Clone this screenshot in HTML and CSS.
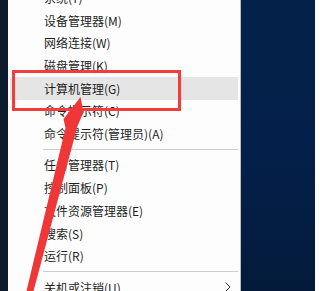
FILE: index.html
```html
<!DOCTYPE html>
<html lang="zh-CN">
<head>
<meta charset="utf-8">
<title>Win+X 菜单</title>
<link rel="stylesheet" href="styles.css">
</head>
<body>
<div class="screen">
  <div class="strip"></div>
  <div class="menu">
    <ul class="items">
      <li class="item">系统(Y)</li>
      <li class="item">设备管理器(M)</li>
      <li class="item">网络连接(W)</li>
      <li class="item">磁盘管理(K)</li>
      <li class="item hover">计算机管理(G)</li>
      <li class="item">命令提示符(C)</li>
      <li class="item">命令提示符(管理员)(A)</li>
      <li class="sep"></li>
      <li class="item">任务管理器(T)</li>
      <li class="item">控制面板(P)</li>
      <li class="item">文件资源管理器(E)</li>
      <li class="item">搜索(S)</li>
      <li class="item">运行(R)</li>
      <li class="sep"></li>
      <li class="item">关机或注销(U)<svg class="chev" width="6" height="10" viewBox="0 0 6 10"><path d="M0.5 0.5 L5 5 L0.5 9.5" fill="none" stroke="#333" stroke-width="1"/></svg></li>
    </ul>
  </div>
  <div class="desktop"></div>
  <div class="redbox"></div>
  <svg class="arrow" width="315" height="291" viewBox="0 0 315 291">
    <polygon points="80.5,97 83.5,112 77.5,126 33,293 26,293 65.5,128 63.5,119" fill="#ef3737"/>
  </svg>
</div>
</body>
</html>
```
FILE: styles.css
```css
html, body {
  margin: 0;
  padding: 0;
}
body {
  width: 315px;
  height: 291px;
  overflow: hidden;
  font-family: "Noto Sans CJK SC", "Noto Sans", sans-serif;
  font-size: 12px;
  color: #1e1e1e;
}
.screen {
  position: relative;
  display: flex;
  width: 315px;
  height: 291px;
  overflow: hidden;
}
.strip {
  width: 8px;
  flex: none;
  background: #0c1a2e;
}
.menu {
  width: 232px;
  flex: none;
  background: #fdfdfd;
  border-right: 1px solid #b9bcc0;
  overflow: hidden;
}
.items {
  list-style: none;
  margin: -13.85px 0 0 0;
  padding: 0;
}
.item {
  display: flex;
  align-items: center;
  height: 22.7px;
  margin: 0 2px;
  padding: 0 7px 0 34px;
  white-space: nowrap;
}
.item.hover {
  background: #e5e5e5;
}
.chev {
  margin-left: auto;
}
.sep {
  height: 8.65px;
  display: flex;
  align-items: center;
  margin: 0 2px 0 35px;
}
.sep::after {
  content: "";
  flex: 1;
  height: 1px;
  background: #cfcfcf;
}
.desktop {
  flex: 1;
  background: linear-gradient(180deg, #042249 0%, #04204a 50%, #031a3a 100%);
}
.redbox {
  position: absolute;
  left: 12px;
  top: 70px;
  width: 163px;
  height: 35px;
  border: 3px solid #f23d3d;
}
.arrow {
  position: absolute;
  left: 0;
  top: 0;
  pointer-events: none;
}
```
